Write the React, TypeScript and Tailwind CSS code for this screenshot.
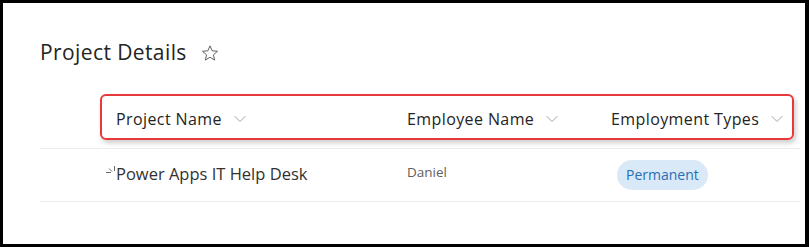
import { ChevronDown } from "lucide-react"

const font = { fontFamily: '"Open Sans", "Noto Sans", sans-serif' }

function Star() {
  return (
    <svg width="18" height="18" viewBox="0 0 24 24" fill="none" stroke="#605e5c" strokeWidth="1.3" strokeLinejoin="round">
      <path d="M12 2.5l2.9 6.6 7.1.6-5.4 4.7 1.6 7-6.2-3.7-6.2 3.7 1.6-7L2 9.7l7.1-.6z" />
    </svg>
  )
}

function Spinner() {
  return (
    <svg width="10" height="11" viewBox="0 0 10 11" stroke="#6b6a69" strokeWidth="1" className="mb-[10px] shrink-0">
      <path d="M0 6.5h5" />
      <path d="M3 2.5l3 3" />
      <path d="M8.5 0v5" />
    </svg>
  )
}

function HeaderCell({ label, width }: { label: string; width?: string }) {
  return (
    <div className={`flex items-center gap-[8px] ${width ?? ""}`}>
      <span className="text-[16px] tracking-[0.4px] text-[#252423]">{label}</span>
      <ChevronDown size={20} strokeWidth={0.9} color="#8a8886" />
    </div>
  )
}

export default function App() {
  return (
    <div
      className="h-[247px] w-[809px] overflow-hidden border-y-[3px] border-l-[3px] border-r-[4px] border-black bg-white"
      style={font}
    >
      <div className="flex items-center gap-[14px] pl-[37px] pt-[34px]">
        <h1 className="text-[21px] tracking-[0.4px] text-[#252423]">Project Details</h1>
        <Star />
      </div>

      <div className="ml-[37px] mr-[5px] mt-[25px]">
        <div className="ml-[60px] mr-[6px] flex h-[46px] items-center rounded-[6px] border-2 border-[#e8393a] pl-[14px] pt-[5px] shadow-[2px_3px_5px_rgba(0,0,0,0.2)]">
          <HeaderCell label="Project Name" width="w-[291px]" />
          <HeaderCell label="Employee Name" width="w-[204px]" />
          <HeaderCell label="Employment Types" />
        </div>

        <div className="mt-[8px] flex h-[54px] items-center border-y border-[#edebe9] pl-[66px]">
          <div className="flex w-[301px] items-end">
            <Spinner />
            <span className="text-[16.5px] text-[#323130]">Power Apps IT Help Desk</span>
          </div>
          <div className="w-[210px] pb-[4px] text-[13.5px] text-[#605e5c]">Daniel</div>
          <div>
            <span className="inline-flex h-[30px] items-center rounded-full bg-[#d9e9f7] px-[9px] text-[14px] text-[#2a6db5]">
              Permanent
            </span>
          </div>
        </div>
      </div>
    </div>
  )
}
